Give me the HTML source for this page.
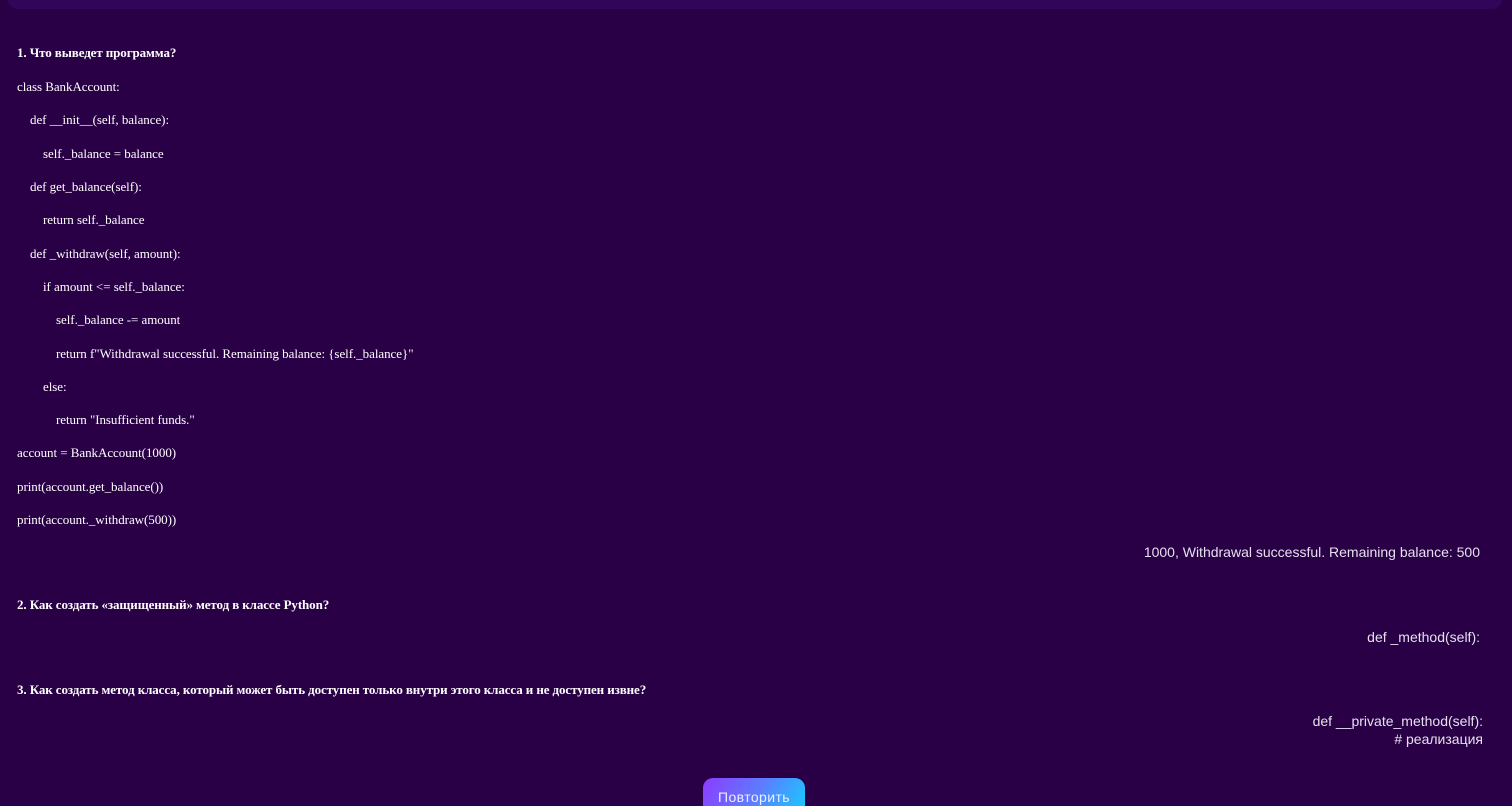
<!DOCTYPE html>
<html><head><meta charset="utf-8"><style>
html,body{margin:0;padding:0;background:#290046;width:1512px;height:806px;overflow:hidden;position:relative}
.top{position:absolute;left:8px;right:10px;top:-10px;height:19px;background:#30055a;border-radius:10px}
.l{position:absolute;font-family:"Liberation Serif","Noto Serif CJK SC",serif;font-size:13px;color:#fff;white-space:pre;line-height:16px;letter-spacing:-0.05px}
.b{font-weight:bold;font-size:13px;letter-spacing:-0.1px}
.r{position:absolute;right:32px;font-family:"Liberation Sans","Noto Sans CJK SC",sans-serif;font-size:14px;color:#e6e0ee;text-align:right;line-height:18px;letter-spacing:0}
.btn{position:absolute;left:703px;top:778px;width:102px;height:40px;border-radius:10px;background:linear-gradient(120deg,#8d3bff,#5e7bff 50%,#12d0ff);color:#eef;font-family:"Liberation Sans",sans-serif;font-size:14px;letter-spacing:0.4px;text-align:center;line-height:38px}
</style></head><body>
<div class="top"></div>
<div class="l b" style="left:17px;top:45px">1. Что выведет программа?</div>
<div class="l" style="left:17px;top:79px">class BankAccount:</div>
<div class="l" style="left:30px;top:112px">def __init__(self, balance):</div>
<div class="l" style="left:43px;top:146px">self._balance = balance</div>
<div class="l" style="left:30px;top:179px">def get_balance(self):</div>
<div class="l" style="left:43px;top:212px">return self._balance</div>
<div class="l" style="left:30px;top:246px">def _withdraw(self, amount):</div>
<div class="l" style="left:43px;top:279px">if amount &lt;= self._balance:</div>
<div class="l" style="left:56px;top:312px">self._balance -= amount</div>
<div class="l" style="left:56px;top:346px">return f"Withdrawal successful. Remaining balance: {self._balance}"</div>
<div class="l" style="left:43px;top:379px">else:</div>
<div class="l" style="left:56px;top:412px">return "Insufficient funds."</div>
<div class="l" style="left:17px;top:445px">account = BankAccount(1000)</div>
<div class="l" style="left:17px;top:479px">print(account.get_balance())</div>
<div class="l" style="left:17px;top:512px">print(account._withdraw(500))</div>
<div class="r" style="top:543px">1000, Withdrawal successful. Remaining balance: 500</div>
<div class="l b" style="left:17px;top:597px">2. Как создать «защищенный» метод в классе Python?</div>
<div class="r" style="top:628px">def _method(self):</div>
<div class="l b" style="left:17px;top:682px">3. Как создать метод класса, который может быть доступен только внутри этого класса и не доступен извне?</div>
<div class="r" style="top:712px;right:29px">def __private_method(self):<br># реализация</div>
<div class="btn">Повторить</div>
</body></html>
